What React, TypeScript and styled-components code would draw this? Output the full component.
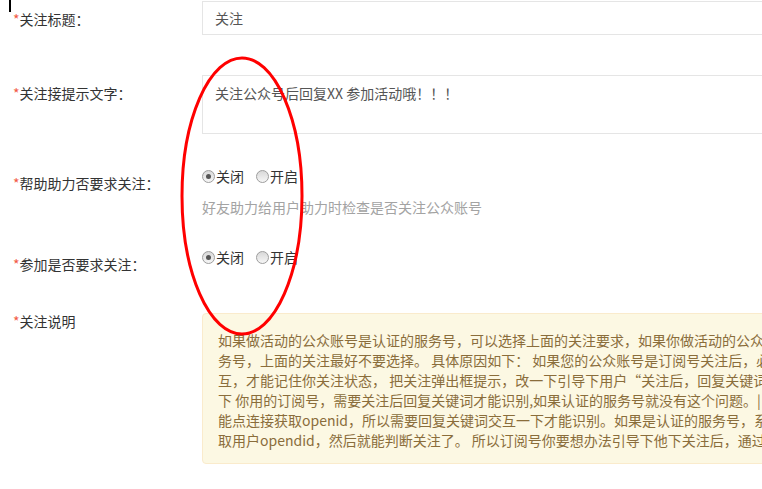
import styled, { createGlobalStyle } from "styled-components";

const GlobalStyle = createGlobalStyle`
  body {
    margin: 0;
    background: #fff;
    overflow: hidden;
    font-family: "Microsoft YaHei", "Noto Sans CJK SC", "Noto Sans", sans-serif;
  }
`;

const Page = styled.div`
  position: relative;
  width: 1100px;
  height: 489px;
  padding: 1px 0 0 13px;
  box-sizing: border-box;
  font-size: 14px;
  color: #333;
`;

const Caret = styled.span`
  position: absolute;
  left: 9px;
  top: 0;
  width: 2px;
  height: 12px;
  background: #000;
`;

const Row = styled.div<{ $mt?: number }>`
  display: grid;
  grid-template-columns: 189px 880px;
  align-items: start;
  margin-top: ${(p) => p.$mt ?? 0}px;
`;

const Label = styled.label<{ $pt?: number }>`
  padding-top: ${(p) => p.$pt ?? 8}px;
  line-height: 20px;
  color: #333;
  white-space: nowrap;
`;

const Star = styled.span`
  color: #f25a45;
`;

const Field = styled.div<{ $tall?: boolean }>`
  box-sizing: border-box;
  height: ${(p) => (p.$tall ? 59 : 34)}px;
  padding: ${(p) => (p.$tall ? "7px 12px" : "6px 12px")};
  border: 1px solid #e5e5e5;
  line-height: 20px;
  color: #555;
  background: #fff;
`;

const Radios = styled.div`
  display: flex;
  align-items: center;
  gap: 12px;
  height: 20px;
  line-height: 20px;
`;

const Option = styled.span`
  display: inline-flex;
  align-items: center;
  gap: 1px;
  color: #333;
`;

const Dot = styled.span<{ $on?: boolean }>`
  position: relative;
  box-sizing: border-box;
  width: 13px;
  height: 13px;
  border-radius: 50%;
  border: 1px solid #9d9d9d;
  background: linear-gradient(#d8d8d8, #f6f6f6);

  &::after {
    content: "";
    display: ${(p) => (p.$on ? "block" : "none")};
    position: absolute;
    left: 3px;
    top: 3px;
    width: 5px;
    height: 5px;
    border-radius: 50%;
    background: #555;
  }
`;

const Help = styled.div`
  margin-top: 11px;
  line-height: 20px;
  color: #a3a3a3;
`;

const Notice = styled.div`
  margin-top: 2px;
  padding: 16px 15px 13px;
  border: 1px solid #faebcc;
  border-radius: 4px;
  background: #fcf8e3;
  color: #8a6d3b;
  line-height: 20px;
`;

const Line = styled.div`
  white-space: nowrap;
`;

const Mark = styled.svg`
  position: absolute;
  left: 0;
  top: 0;
  pointer-events: none;
`;

const notice = [
  "如果做活动的公众账号是认证的服务号，可以选择上面的关注要求，如果你做活动的公众账号是订阅号或者未认证的服",
  "务号，上面的关注最好不要选择。 具体原因如下： 如果您的公众账号是订阅号关注后，必须回复关键词交",
  "互，才能记住你关注状态， 把关注弹出框提示，改一下引导下用户“关注后，回复关键词参与活动”解释一",
  "下 你用的订阅号，需要关注后回复关键词才能识别,如果认证的服务号就没有这个问题。| 订阅号不",
  "能点连接获取openid，所以需要回复关键词交互一下才能识别。如果是认证的服务号，系统会自动获",
  "取用户opendid，然后就能判断关注了。 所以订阅号你要想办法引导下他下关注后，通过回复关键词参与。",
];

const RadioGroup = () => (
  <Radios>
    <Option>
      <Dot $on />
      关闭
    </Option>
    <Option>
      <Dot />
      开启
    </Option>
  </Radios>
);

export default function App() {
  return (
    <>
      <GlobalStyle />
      <Page>
        <Caret />
        <Row>
          <Label>
            <Star>*</Star>关注标题：
          </Label>
          <Field>关注</Field>
        </Row>
        <Row $mt={40}>
          <Label>
            <Star>*</Star>关注接提示文字：
          </Label>
          <Field $tall>关注公众号后回复XX 参加活动哦！！！</Field>
        </Row>
        <Row $mt={32}>
          <Label $pt={7}>
            <Star>*</Star>帮助助力否要求关注：
          </Label>
          <div>
            <RadioGroup />
            <Help>好友助力给用户助力时检查是否关注公众账号</Help>
          </div>
        </Row>
        <Row $mt={30}>
          <Label $pt={7}>
            <Star>*</Star>参加是否要求关注：
          </Label>
          <RadioGroup />
        </Row>
        <Row $mt={37}>
          <Label $pt={0}>
            <Star>*</Star>关注说明
          </Label>
          <Notice>
            {notice.map((t) => (
              <Line key={t}>{t}</Line>
            ))}
          </Notice>
        </Row>
        <Mark width="762" height="489" viewBox="0 0 762 489">
          <ellipse cx="242" cy="196" rx="60" ry="138" fill="none" stroke="#ff0000" strokeWidth="3" />
        </Mark>
      </Page>
    </>
  );
}
